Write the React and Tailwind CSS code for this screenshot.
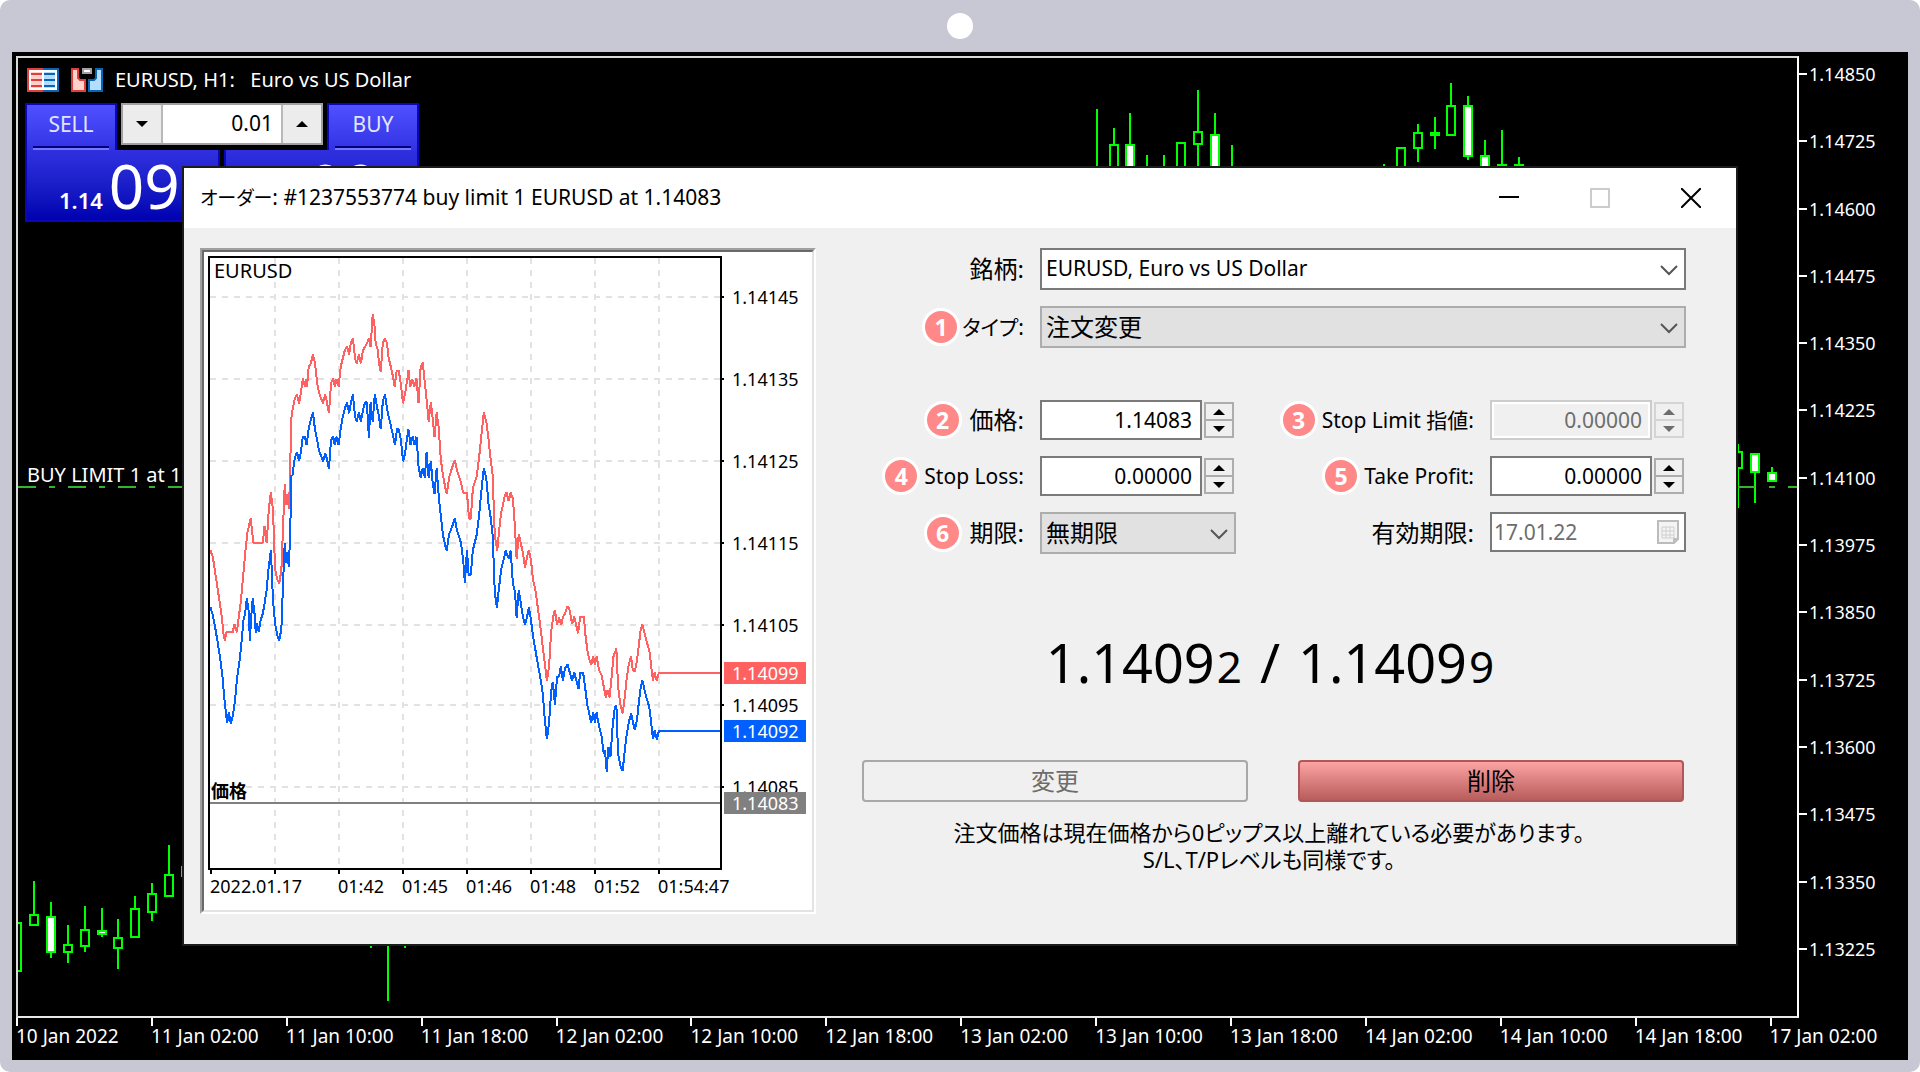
import React from "react";

const PRICE_LEVELS = [
  "1.14850", "1.14725", "1.14600", "1.14475", "1.14350", "1.14225", "1.14100",
  "1.13975", "1.13850", "1.13725", "1.13600", "1.13475", "1.13350", "1.13225",
];

const TIME_LABELS = [
  "10 Jan 2022", "11 Jan 02:00", "11 Jan 10:00", "11 Jan 18:00", "12 Jan 02:00",
  "12 Jan 10:00", "12 Jan 18:00", "13 Jan 02:00", "13 Jan 10:00", "13 Jan 18:00",
  "14 Jan 02:00", "14 Jan 10:00", "14 Jan 18:00", "17 Jan 02:00",
];

// x, wick top, wick bottom, body top, body bottom, bearish
const CANDLES = [
  [17, 923, 971, 923, 971, 0],
  [34, 881, 925, 915, 925, 0],
  [51, 902, 958, 917, 952, 1],
  [68, 925, 963, 945, 952, 0],
  [85, 906, 952, 930, 946, 0],
  [102, 908, 937, 931, 934, 1],
  [118, 919, 969, 938, 948, 0],
  [135, 896, 937, 909, 937, 0],
  [152, 883, 921, 894, 912, 0],
  [169, 845, 897, 875, 896, 0],
  [186, 867, 876, 867, 876, 0],
  [388, 940, 1001, 940, 941, 1],
  [1097, 109, 200, 180, 200, 0],
  [1114, 128, 200, 145, 200, 0],
  [1130, 113, 200, 145, 200, 1],
  [1147, 155, 200, 180, 200, 0],
  [1164, 155, 200, 180, 200, 0],
  [1181, 143, 200, 143, 200, 0],
  [1198, 90, 200, 132, 144, 0],
  [1215, 113, 200, 135, 200, 1],
  [1232, 145, 200, 180, 200, 0],
  [1384, 164, 200, 180, 200, 0],
  [1401, 147, 200, 148, 200, 0],
  [1418, 124, 162, 133, 148, 0],
  [1435, 117, 149, 133, 135, 0],
  [1451, 83, 136, 106, 135, 0],
  [1468, 96, 160, 106, 156, 1],
  [1485, 140, 200, 156, 200, 1],
  [1502, 130, 200, 165, 200, 0],
  [1519, 157, 200, 165, 200, 0],
  [1738, 444, 508, 452, 468, 0],
  [1755, 453, 503, 454, 472, 1],
  [1772, 467, 482, 473, 481, 1],
];

const ASK =
  "72,990 78,1010 84,1060 90,1110 96,1160 100,1195 103,1240 107,1262 110,1237 125,1237 130,1212 135,1237 140,1190 145,1140 150,1070 155,1000 160,940 168,895 172,940 174,968 197,968 201,918 206,970 211,870 216,816 221,870 226,1045 231,1078 236,1090 241,1050 245,920 249,793 252,855 255,822 259,868 262,750 264,600 268,565 273,535 278,523 283,550 287,520 292,476 297,500 300,476 302,500 306,440 311,430 316,403 321,430 326,490 330,515 335,535 340,550 345,523 349,545 354,580 359,490 364,476 368,500 372,478 377,500 382,440 387,415 392,390 397,378 402,405 406,370 411,355 416,415 420,430 425,403 430,430 435,390 440,380 445,368 449,355 453,382 458,282 463,325 465,370 470,390 473,430 477,455 482,370 487,355 492,370 496,415 502,445 507,475 510,500 515,452 520,452 525,495 530,550 535,520 540,480 543,450 547,500 552,478 557,500 562,475 567,550 572,440 577,427 582,490 587,550 591,605 596,547 601,600 605,652 610,577 615,625 620,720 625,765 630,800 634,822 640,770 648,738 653,720 658,750 667,785 673,818 682,818 687,897 691,897 696,805 705,770 711,710 716,650 722,577 728,605 733,655 738,715 743,765 748,945 754,993 758,935 763,880 768,852 772,825 776,818 781,843 786,818 791,835 796,920 800,1018 805,943 810,970 815,1000 820,1043 825,1010 829,990 834,1020 839,1080 844,1105 850,1160 856,1215 862,1280 867,1330 872,1384 877,1340 882,1235 887,1190 891,1170 896,1215 901,1193 906,1215 910,1190 915,1182 920,1160 925,1165 932,1212 937,1190 946,1240 951,1190 960,1190 963,1240 968,1290 972,1315 977,1335 982,1310 986,1335 990,1310 996,1350 1002,1365 1007,1400 1012,1432 1016,1410 1021,1432 1025,1380 1030,1310 1037,1285 1041,1400 1046,1450 1052,1480 1057,1430 1062,1370 1067,1330 1072,1310 1076,1350 1081,1355 1086,1320 1091,1270 1095,1225 1099,1214 1104,1240 1109,1265 1115,1290 1119,1330 1124,1382 1128,1358 1133,1382 1138,1359 1285,1359";

const BID =
  "72,1160 78,1185 84,1225 90,1270 96,1320 101,1370 105,1430 109,1475 112,1510 116,1478 121,1510 126,1485 131,1440 136,1370 141,1330 146,1270 151,1200 155,1180 159,1134 164,1180 166,1262 170,1180 173,1134 178,1190 180,1238 183,1210 187,1235 192,1200 197,1180 201,1150 206,1110 211,1040 216,990 221,1140 226,1210 231,1245 236,1262 241,1225 245,1090 249,968 252,1030 254,995 259,1042 263,880 264,768 268,765 270,738 273,712 278,697 283,722 287,700 292,650 297,650 301,675 306,625 311,600 316,577 321,630 326,660 330,690 340,724 345,700 349,715 354,748 359,660 364,650 368,675 372,650 377,675 382,625 387,590 392,565 397,547 402,580 406,550 411,523 416,590 420,605 425,577 430,605 435,570 440,547 444,547 449,653 453,547 458,605 463,523 468,560 473,590 477,628 482,545 487,523 492,565 496,590 502,622 507,650 511,675 516,625 520,628 525,660 530,724 535,700 540,650 543,628 548,675 553,650 557,675 562,650 567,740 572,773 577,745 582,773 586,697 591,773 596,722 601,795 605,822 610,745 615,830 620,890 625,945 630,975 634,993 639,945 648,915 653,895 658,930 668,970 673,1020 677,1090 682,990 686,1065 691,1065 696,990 705,945 711,885 716,815 722,745 728,775 733,850 738,890 743,945 748,1115 753,1163 758,1105 763,1050 768,1025 774,992 781,1015 786,992 791,1090 796,1115 800,1193 805,1110 810,1150 815,1190 820,1215 825,1190 829,1160 834,1200 839,1250 844,1285 850,1330 856,1370 862,1420 867,1500 872,1558 877,1510 882,1415 886,1385 891,1455 896,1370 901,1370 905,1338 910,1382 915,1345 921,1333 928,1365 932,1382 937,1358 947,1407 951,1358 958,1358 963,1405 968,1455 972,1478 977,1508 982,1478 986,1508 990,1478 996,1520 1002,1550 1007,1600 1010,1590 1014,1655 1018,1580 1023,1610 1028,1520 1033,1465 1037,1455 1041,1600 1047,1640 1052,1652 1057,1590 1062,1540 1067,1505 1072,1480 1076,1505 1081,1530 1086,1500 1091,1440 1095,1400 1099,1382 1104,1410 1109,1435 1115,1460 1119,1500 1124,1558 1128,1532 1133,1558 1138,1533 1285,1533";

const TICK_PRICES = [
  [297, "1.14145"], [379, "1.14135"], [461, "1.14125"], [543, "1.14115"],
  [625, "1.14105"], [705, "1.14095"], [787, "1.14085"],
];

const TICK_TIMES = [
  [210, "2022.01.17"], [338, "01:42"], [402, "01:45"], [466, "01:46"],
  [530, "01:48"], [594, "01:52"], [658, "01:54:47"],
];

const GRID_X = [275, 339, 403, 467, 531, 595, 659];

const PRICE_TAGS = [
  [662, "1.14099", "#ff6060"],
  [720, "1.14092", "#0060ff"],
  [792, "1.14083", "#808080"],
];

function CandleChart() {
  return (
    <svg
      className="absolute inset-0 h-full w-full"
      viewBox="18 58 1779 958"
      preserveAspectRatio="xMinYMin meet"
      aria-hidden="true"
    >
      {CANDLES.map(([x, wt, wb, bt, bb, bear]) => (
        <g key={x} stroke="#00ff00" strokeWidth="2">
          <line x1={x} x2={x} y1={wt} y2={wb} />
          <rect x={x - 4} y={bt} width="8" height={bb - bt} fill={bear ? "#fff" : "#000"} />
        </g>
      ))}
      <path d="M371 940v8M405 940v8" stroke="#00ff00" strokeWidth="2" />
      <line x1="18" x2="184" y1="487" y2="487" stroke="#32b432" strokeWidth="2" strokeDasharray="18 13 6 13" />
      <path d="M1737 487h18M1769 487h6M1788 487h9" stroke="#32b432" strokeWidth="2" />
      <text x="27" y="482" fill="#fff" fontSize="20">
        BUY LIMIT  1 at 1.14083
      </text>
    </svg>
  );
}

function TickChart() {
  return (
    <svg
      className="block w-full font-['Noto_Sans','Noto_Sans_CJK_JP',sans-serif]"
      viewBox="204 252 608 658"
      role="img"
      aria-label="EURUSD"
    >
      <rect x="204" y="252" width="608" height="658" fill="#fff" />
      <g stroke="#e2e2e2" strokeWidth="2" strokeDasharray="6 6">
        {TICK_PRICES.map(([y]) => (
          <line key={y} x1="210" x2="720" y1={y} y2={y} />
        ))}
        {GRID_X.map((x) => (
          <line key={x} x1={x} x2={x} y1="258" y2="868" />
        ))}
      </g>
      <line x1="210" x2="720" y1="803" y2="803" stroke="#808080" strokeWidth="2" />
      <svg x="209" y="256" width="513" height="614" viewBox="69 108 1219 1842" preserveAspectRatio="none">
        <g fill="none" strokeWidth="2" strokeLinejoin="bevel" shapeRendering="crispEdges">
          <polyline points={ASK} stroke="#ff6060" vectorEffect="non-scaling-stroke" />
          <polyline points={BID} stroke="#0060ff" vectorEffect="non-scaling-stroke" />
        </g>
      </svg>
      <rect x="209" y="257" width="512" height="612" fill="none" stroke="#000" strokeWidth="2" />
      <g stroke="#000" strokeWidth="2">
        {TICK_PRICES.map(([y]) => (
          <line key={y} x1="721" x2="724" y1={y} y2={y} />
        ))}
        {[211, ...GRID_X].map((x) => (
          <line key={x} x1={x} x2={x} y1="869" y2="874" />
        ))}
      </g>
      <g fontSize="18" fill="#000">
        <text x="214" y="278" fontSize="20">EURUSD</text>
        <text x="211" y="798" fontWeight="700">価格</text>
        {TICK_PRICES.map(([y, label]) => (
          <text key={label} x="732" y={y + 7}>{label}</text>
        ))}
        {TICK_TIMES.map(([x, label]) => (
          <text key={label} x={x} y="893">{label}</text>
        ))}
      </g>
      {PRICE_TAGS.map(([y, label, color]) => (
        <g key={label}>
          <rect x="724" y={y} width="82" height="22" fill={color} />
          <text x="732" y={y + 18} fontSize="18" fill="#fff">{label}</text>
        </g>
      ))}
    </svg>
  );
}

function DepthIcon() {
  return (
    <svg width="32" height="24" viewBox="0 0 32 24" aria-hidden="true">
      <path d="M0 0h16v24H0z" fill="#e0403c" />
      <path d="M16 0h16v24H16z" fill="#0a64b4" />
      <path d="M2 2h28v20H2z" fill="#fff" />
      <path d="M4 4h11v16H4z" fill="#ffd2cc" />
      <path d="M17 4h11v16H17z" fill="#b4deff" />
      <path d="M4 6h11M4 12h11M4 18h11" stroke="#e0403c" strokeWidth="2" />
      <path d="M17 6h11M17 12h11M17 18h11" stroke="#0a64b4" strokeWidth="2" />
    </svg>
  );
}

function OneClickIcon() {
  return (
    <svg width="32" height="24" viewBox="0 0 32 24" aria-hidden="true">
      <path d="M1 1h6v9l2 2h5v11H1z" fill="#ffd2cc" stroke="#e0403c" strokeWidth="2" />
      <path d="M31 1h-6v9l-2 2h-5v11h13z" fill="#b4deff" stroke="#0a64b4" strokeWidth="2" />
      <path d="M11 0h10v6H11z" fill="#a0a0a0" />
      <path d="M13 2h6v2h-6z" fill="#fff" />
    </svg>
  );
}

function QuoteTab({ label }) {
  return (
    <button className="flex h-[47px] w-[92px] flex-col items-center border-2 border-b-0 border-[#0808b8] bg-linear-to-b from-[#5050ff] to-[#3232e4] px-1.5 text-[21px] leading-[38px] text-[#e4e4ff]">
      {label}
      <span className="mt-auto h-1 w-full border-t-2 border-[#00007c] bg-[#7878ff]" />
    </button>
  );
}

function QuoteBody() {
  return (
    <div className="flex h-[72px] flex-1 items-baseline gap-1.5 border-2 border-t-0 border-[#0808b8] bg-linear-to-b from-[#3030e0] to-[#0000b0] pl-8 text-white">
      <span className="text-[22px] font-semibold">1.14</span>
      <span className="text-[62px] leading-[70px]">09</span>
    </div>
  );
}

function OneClickPanel() {
  return (
    <div className="w-[394px]">
      <div className="flex items-start gap-1">
        <QuoteTab label="SELL" />
        <div className="flex h-[42px] flex-1 border-2 border-[#a0a0a0] bg-[#ececec]">
          <button aria-label="ロットを減らす" className="flex w-10 items-center justify-center border-r-2 border-[#b8b8b8]">
            <svg width="12" height="6" viewBox="0 0 12 6"><path d="M0 0h12L6 6z" /></svg>
          </button>
          <input aria-label="ロット" defaultValue="0.01" className="w-0 flex-1 bg-white px-2 text-right text-[21px] text-black outline-none" />
          <button aria-label="ロットを増やす" className="flex w-10 items-center justify-center border-l-2 border-[#b8b8b8]">
            <svg width="12" height="6" viewBox="0 0 12 6"><path d="M0 6h12L6 0z" /></svg>
          </button>
        </div>
        <QuoteTab label="BUY" />
      </div>
      <div className="flex gap-1">
        <QuoteBody />
        <QuoteBody />
      </div>
    </div>
  );
}

function Badge({ n }) {
  return (
    <span className="flex size-[38px] items-center justify-center rounded-full border-3 border-white bg-[#ff8888] font-['Open_Sans',sans-serif] text-[23px] font-bold leading-none text-white">
      {n}
    </span>
  );
}

function FieldLabel({ n, htmlFor, size = "text-[21px]", gap = "gap-1", children }) {
  return (
    <div className={"flex items-center justify-end " + gap}>
      {n && <Badge n={n} />}
      <label
        htmlFor={htmlFor}
        className={"whitespace-nowrap leading-[38px] [font-feature-settings:'palt'] " + size}
      >
        {children}
      </label>
    </div>
  );
}

function Select({ id, value, className }) {
  return (
    <div className="relative">
      <select id={id} defaultValue={value} className={"h-[42px] w-full appearance-none border-2 px-1 outline-none " + className}>
        <option>{value}</option>
      </select>
      <svg className="pointer-events-none absolute right-2 top-4" width="18" height="12" viewBox="0 0 18 12" fill="none" stroke="#555" strokeWidth="2">
        <path d="M1 2l8 8 8-8" />
      </svg>
    </div>
  );
}

function NumberField({ id, value, disabled = false }) {
  const box = disabled
    ? "border-[#cccccc] bg-[#f0f0f0] text-[#6d6d6d] shadow-[inset_0_0_0_2px_#fff]"
    : "border-[#7a7a7a] bg-white";
  const step = disabled ? "border-[#d4d4d4] text-[#6d6d6d]" : "border-[#adadad] text-black";
  return (
    <div className="flex w-[196px] items-center gap-0.5">
      <input id={id} defaultValue={value} disabled={disabled} className={"h-10 w-[162px] border-2 px-2 text-right text-[21px] outline-none " + box} />
      <div className="flex flex-col">
        <button aria-label="増やす" disabled={disabled} className={"flex h-[19px] w-[30px] items-center justify-center border-2 bg-[#f0f0f0] " + step}>
          <svg width="12" height="6" viewBox="0 0 12 6" fill="currentColor"><path d="M0 6h12L6 0z" /></svg>
        </button>
        <button aria-label="減らす" disabled={disabled} className={"flex h-[17px] w-[30px] items-center justify-center border-2 border-t-0 bg-[#f0f0f0] " + step}>
          <svg width="12" height="6" viewBox="0 0 12 6" fill="currentColor"><path d="M0 0h12L6 6z" /></svg>
        </button>
      </div>
    </div>
  );
}

function OrderForm() {
  return (
    <form className="flex min-w-0 flex-1 flex-col" onSubmit={(e) => e.preventDefault()}>
      <div className="grid grid-cols-[162px_1fr] gap-4">
        <FieldLabel size="text-[24px]" htmlFor="symbol">銘柄:</FieldLabel>
        <Select id="symbol" value="EURUSD, Euro vs US Dollar" className="border-[#7a7a7a] bg-white text-[21px]" />
        <FieldLabel gap="gap-0.5" n="1" htmlFor="type">タイプ:</FieldLabel>
        <Select id="type" value="注文変更" className="border-[#adadad] bg-[#e1e1e1] text-[24px]" />
      </div>
      <div className="mt-[52px] grid grid-cols-[162px_196px_1fr_196px] items-center gap-x-4 gap-y-4">
        <FieldLabel size="text-[24px]" gap="gap-2" n="2" htmlFor="price">価格:</FieldLabel>
        <NumberField id="price" value="1.14083" />
        <FieldLabel n="3" htmlFor="limit">Stop Limit 指値:</FieldLabel>
        <NumberField id="limit" value="0.00000" disabled />
        <FieldLabel n="4" htmlFor="sl">Stop Loss:</FieldLabel>
        <NumberField id="sl" value="0.00000" />
        <FieldLabel n="5" htmlFor="tp">Take Profit:</FieldLabel>
        <NumberField id="tp" value="0.00000" />
        <FieldLabel size="text-[24px]" gap="gap-2" n="6" htmlFor="expiry">期限:</FieldLabel>
        <Select id="expiry" value="無期限" className="border-[#adadad] bg-[#e1e1e1] text-[24px]" />
        <FieldLabel size="text-[24px]" htmlFor="date">有効期限:</FieldLabel>
        <div className="relative h-[42px]">
          <input id="date" defaultValue="17.01.22" disabled className="h-10 w-full border-2 border-[#7a7a7a] bg-white px-0.5 text-[21px] text-[#6d6d6d]" />
          <svg className="absolute top-2 right-1.5" width="24" height="26" viewBox="0 0 24 26" fill="none">
            <path d="M2 1h20v18l-4 4H2z" fill="#f4f4f4" stroke="#bcbcbc" strokeWidth="2" />
            <path d="M18 23v-4h4" stroke="#bcbcbc" strokeWidth="2" />
            <path d="M6 7h12v11H6zM10 7v11M14 7v11M6 11h12M6 15h12" stroke="#cfcfcf" />
          </svg>
        </div>
      </div>
      <div className="mt-[71px] mr-2 flex items-baseline justify-center text-[54px] leading-[74px]">
        1.1409<span className="ml-0.5 text-[44px]">2</span>
        <span className="mx-1 whitespace-pre"> / </span>
        1.1409<span className="ml-0.5 text-[44px]">9</span>
      </div>
      <div className="mt-[57px] mr-0.5 grid grid-cols-2 gap-[50px] text-[24px]">
        <button disabled className="h-[42px] rounded-sm border-2 border-[#a8a8a8] bg-[#f0f0f0] leading-none text-[#6d6d6d]">変更</button>
        <button className="h-[42px] rounded-sm border-2 border-[#b05858] bg-linear-to-b from-[#fca4a4] to-[#b85c5c] leading-none">削除</button>
      </div>
      <p className="mt-[17px] mr-2.5 text-center text-[22px] leading-[27px] [font-feature-settings:'palt']">
        注文価格は現在価格から0ピップス以上離れている必要があります。
        <br />
        S/L、T/Pレベルも同様です。
      </p>
    </form>
  );
}

function OrderDialog() {
  return (
    <section className="absolute inset-x-[170px] top-[114px] border-2 border-[#1c1c1c] bg-[#f0f0f0] text-black">
      <header className="flex h-[60px] items-center bg-white pl-4">
        <h1 className="flex-1 text-[21px] [font-feature-settings:'palt']">
          <span className="text-[19px]">オーダー</span>: #1237553774 buy limit 1 EURUSD at 1.14083
        </h1>
        <button aria-label="最小化" className="flex h-full w-[91px] items-center justify-center">
          <svg width="20" height="20" viewBox="0 0 20 20"><path d="M0 9h20" stroke="#000" strokeWidth="2" /></svg>
        </button>
        <button aria-label="最大化" disabled className="flex h-full w-[91px] items-center justify-center">
          <svg width="20" height="20" viewBox="0 0 20 20"><path d="M1 1h18v18H1z" fill="none" stroke="#ccc" strokeWidth="2" /></svg>
        </button>
        <button aria-label="閉じる" className="flex h-full w-[91px] items-center justify-center">
          <svg width="20" height="20" viewBox="0 0 20 20"><path d="M0 0l20 20M20 0L0 20" stroke="#000" strokeWidth="2" /></svg>
        </button>
      </header>
      <div className="flex items-start gap-[46px] pt-5 pr-[50px] pb-[30px] pl-4">
        <div className="w-[616px] shrink-0 border-2 border-t-[#a0a0a0] border-r-white border-b-white border-l-[#a0a0a0]">
          <div className="border-2 border-t-[#696969] border-r-[#e3e3e3] border-b-[#e3e3e3] border-l-[#696969]">
            <TickChart />
          </div>
        </div>
        <OrderForm />
      </div>
    </section>
  );
}

export default function App() {
  return (
    <div className="min-h-screen bg-white">
      <div className="flex min-h-screen flex-col rounded-[10px] bg-[#c8c7d4] px-3 pb-3 font-['Noto_Sans','Noto_Sans_CJK_JP',sans-serif]">
        <div className="flex h-[52px] items-center justify-center">
          <span className="size-[26px] rounded-full bg-white" />
        </div>
        <main className="relative flex flex-1 flex-col bg-black pt-1 pl-1 text-white">
          <div className="flex flex-1">
            <div className="relative flex-1 border-2 border-t-[#d8d8d8] border-r-white border-b-[#e8e8e8] border-l-[#d8d8d8]">
              <CandleChart />
              <div className="relative flex flex-col items-start gap-1.5 pt-[5px] pl-[7px]">
                <div className="flex items-center gap-3 pl-0.5">
                  <DepthIcon />
                  <OneClickIcon />
                  <span className="whitespace-pre text-[20px] leading-[34px]">EURUSD, H1:   Euro vs US Dollar</span>
                </div>
                <OneClickPanel />
              </div>
            </div>
            <ul className="flex w-[109px] flex-col justify-between pt-2 pb-[59px] text-[18px] leading-5">
              {PRICE_LEVELS.map((p) => (
                <li key={p} className="flex items-center gap-0.5">
                  <span className="h-0.5 w-2 bg-white" />
                  {p}
                </li>
              ))}
            </ul>
          </div>
          <ul className="flex h-[42px] text-[19px]">
            {TIME_LABELS.map((t) => (
              <li key={t} className="flex-none basis-[7.13%] whitespace-nowrap leading-5">
                <span className="block h-2 w-0.5 bg-white" />
                {t}
              </li>
            ))}
          </ul>
          <OrderDialog />
        </main>
      </div>
    </div>
  );
}
